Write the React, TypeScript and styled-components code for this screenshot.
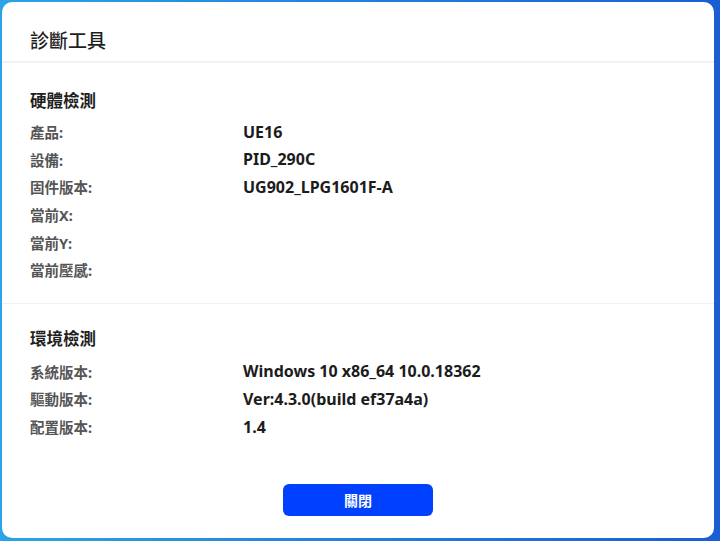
import { Fragment } from 'react';
import styled, { createGlobalStyle } from 'styled-components';

const GlobalStyle = createGlobalStyle`
  html, body {
    margin: 0;
    padding: 0;
  }
  body {
    font-family: "Noto Sans", "Noto Sans CJK TC", sans-serif;
  }
`;

const Backdrop = styled.div`
  width: 720px;
  height: 541px;
  box-sizing: border-box;
  padding: 2px 6px 3px 2px;
  background: linear-gradient(to right, #2ba3e8 0%, #2180dc 50%, #1a5ed4 100%);
  display: flex;
`;

const Dialog = styled.div`
  flex: 1;
  background: #ffffff;
  border-radius: 10px;
  display: flex;
  flex-direction: column;
  overflow: hidden;
`;

const Header = styled.div`
  height: 61px;
  box-sizing: border-box;
  padding: 0 28px 8px;
  display: flex;
  align-items: flex-end;
  border-bottom: 2px solid #f2f2f2;
`;

const Title = styled.h1`
  margin: 0;
  font-size: 19px;
  line-height: 24px;
  font-weight: 500;
  color: #1f1f1f;
`;

const Section = styled.section<{ $divided?: boolean; $top: number }>`
  padding: ${({ $top, $divided }) => `${$top}px 28px ${$divided ? 19 : 0}px`};
  border-bottom: ${({ $divided }) => ($divided ? '1px solid #f0f0f0' : 'none')};
`;

const SectionTitle = styled.h2<{ $gap: number }>`
  margin: 0 0 ${({ $gap }) => $gap}px;
  font-size: 16.5px;
  line-height: 24px;
  font-weight: 700;
  color: #1f1f1f;
`;

const Rows = styled.div`
  display: grid;
  grid-template-columns: 213px 1fr;
  grid-auto-rows: 27.6px;
  align-items: center;
`;

const Label = styled.span`
  font-size: 14.5px;
  font-weight: 700;
  color: #555555;
`;

const Value = styled.span`
  font-size: 16px;
  font-weight: 700;
  color: #1c1c1c;
`;

const Footer = styled.div`
  margin-top: auto;
  padding-bottom: 22px;
  display: flex;
  justify-content: center;
`;

const Button = styled.button`
  width: 150px;
  height: 32px;
  border: none;
  border-radius: 6px;
  background: #0041ff;
  color: #ffffff;
  font-family: inherit;
  font-size: 14px;
  font-weight: 700;
  cursor: pointer;
`;

type Row = { label: string; value?: string };

const hardware: Row[] = [
  { label: '產品:', value: 'UE16' },
  { label: '設備:', value: 'PID_290C' },
  { label: '固件版本:', value: 'UG902_LPG1601F-A' },
  { label: '當前X:' },
  { label: '當前Y:' },
  { label: '當前壓感:' },
];

const environment: Row[] = [
  { label: '系統版本:', value: 'Windows 10 x86_64 10.0.18362' },
  { label: '驅動版本:', value: 'Ver:4.3.0(build ef37a4a)' },
  { label: '配置版本:', value: '1.4' },
];

function InfoRows({ rows }: { rows: Row[] }) {
  return (
    <Rows>
      {rows.map((r) => (
        <Fragment key={r.label}>
          <Label>{r.label}</Label>
          <Value>{r.value ?? ''}</Value>
        </Fragment>
      ))}
    </Rows>
  );
}

export default function App() {
  return (
    <>
      <GlobalStyle />
      <Backdrop>
        <Dialog>
          <Header>
            <Title>診斷工具</Title>
          </Header>
          <Section $divided $top={26}>
            <SectionTitle $gap={5}>硬體檢測</SectionTitle>
            <InfoRows rows={hardware} />
          </Section>
          <Section $top={23}>
            <SectionTitle $gap={7}>環境檢測</SectionTitle>
            <InfoRows rows={environment} />
          </Section>
          <Footer>
            <Button>關閉</Button>
          </Footer>
        </Dialog>
      </Backdrop>
    </>
  );
}
